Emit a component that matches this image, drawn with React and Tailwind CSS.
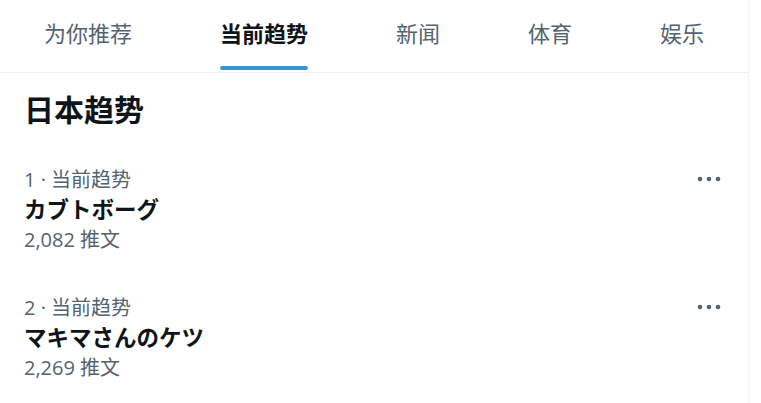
import React from 'react';

const tabs = ['为你推荐', '当前趋势', '新闻', '体育', '娱乐'];

const trends = [
  { rank: 1, name: 'カブトボーグ', count: '2,082' },
  { rank: 2, name: 'マキマさんのケツ', count: '2,269' },
];

const MoreIcon = () => (
  <svg width="24" height="8" viewBox="0 0 24 8" className="text-[#536471]" fill="currentColor">
    <circle cx="3" cy="4" r="2.3" />
    <circle cx="12" cy="4" r="2.3" />
    <circle cx="21" cy="4" r="2.3" />
  </svg>
);

const App = () => {
  const active = 1;

  return (
    <div className="w-[761px] h-[403px] bg-white overflow-hidden font-['Open_Sans','Noto_Sans_CJK_SC',sans-serif]">
      <div className="w-[749px] h-full border-r border-[#eff3f4]">
        {/* Tabs */}
        <div className="flex h-[73px] border-b border-[#eff3f4]">
          {tabs.map((t, i) => (
            <div key={t} className="flex-auto flex justify-center">
              <div className="flex flex-col items-center">
                <span
                  className={`mt-[19px] text-[22px] leading-[28px] ${
                    i === active ? 'font-bold text-[#0f1419]' : 'text-[#536471]'
                  }`}
                >
                  {t}
                </span>
                {i === active && <div className="mt-auto mb-[2px] w-full h-[4px] rounded-full bg-[#3496d8]" />}
              </div>
            </div>
          ))}
        </div>

        {/* Heading */}
        <h2 className="px-6 pt-[19px] text-[30px] leading-[36px] font-bold text-[#0f1419]">日本趋势</h2>

        {/* Trends */}
        <div className="px-6 pt-[40px] flex flex-col gap-[44px]">
          {trends.map((tr) => (
            <div key={tr.rank}>
              <div className="flex items-center justify-between text-[20px] leading-[24px] text-[#536471]">
                <span>{tr.rank} · 当前趋势</span>
                <span className="mr-[3px] -mt-[2px]">
                  <MoreIcon />
                </span>
              </div>
              <div className="mt-[2px] text-[22.5px] leading-[28px] font-bold text-[#0f1419] font-['Noto_Sans_CJK_JP',sans-serif]">
                {tr.name}
              </div>
              <div className="mt-[6px] text-[20px] leading-[24px] text-[#536471]">{tr.count} 推文</div>
            </div>
          ))}
        </div>
      </div>
    </div>
  );
};

export default App;
